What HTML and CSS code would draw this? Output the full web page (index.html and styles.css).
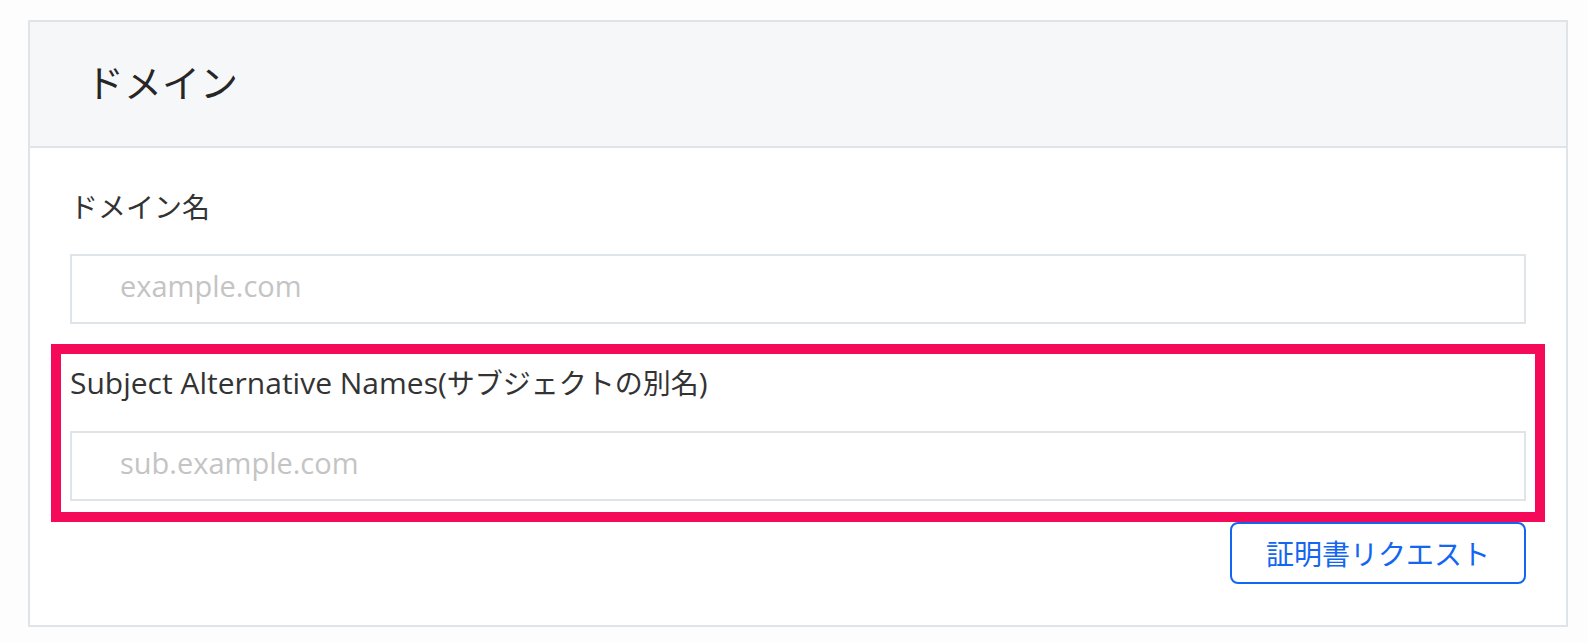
FILE: index.html
```html
<!DOCTYPE html>
<html lang="ja">
<head>
<meta charset="utf-8">
<title>ドメイン</title>
<link rel="stylesheet" href="styles.css">
</head>
<body>
<section class="card">
  <header class="card-header">
    <h2 class="card-title">ドメイン</h2>
  </header>
  <div class="card-body">
    <div class="form-group">
      <label class="form-label" for="domain">ドメイン名</label>
      <input class="form-input" id="domain" type="text" placeholder="example.com">
    </div>
    <div class="form-group form-group-san">
      <label class="form-label" for="san"><span class="latin">Subject Alternative Names(</span>サブジェクトの別名<span class="latin">)</span></label>
      <input class="form-input" id="san" type="text" placeholder="sub.example.com">
      <div class="highlight"></div>
    </div>
    <div class="actions">
      <button class="btn-outline" type="button">証明書リクエスト</button>
    </div>
  </div>
</section>
</body>
</html>
```

FILE: styles.css
```css
* { box-sizing: border-box; }

html, body {
  margin: 0;
  padding: 0;
  background: #fdfdfd;
}

body {
  font-family: "Open Sans", "Noto Sans CJK JP", sans-serif;
  color: #333;
  padding: 20px 20px 16px 28px;
}

.card {
  border: 2px solid #dfe4e8;
  background: #fff;
}

.card-header {
  height: 126px;
  background: #f6f7f9;
  border-bottom: 2px solid #dfe4e8;
  display: flex;
  align-items: center;
  padding-left: 56px;
  padding-bottom: 7px;
}

.card-title {
  margin: 0;
  font-family: "Noto Sans CJK JP", sans-serif;
  font-weight: 400;
  font-size: 38px;
  line-height: 50px;
  color: #262626;
}

.card-body {
  padding: 38px 40px 41px 40px;
  display: flex;
  flex-direction: column;
}

.form-group {
  display: flex;
  flex-direction: column;
  gap: 28px;
}

.form-group + .form-group {
  margin-top: 38px;
}

.form-group-san {
  position: relative;
}

.form-label {
  font-family: "Noto Sans CJK JP", sans-serif;
  font-size: 28px;
  line-height: 40px;
  color: #333;
}

.latin {
  font-family: "Open Sans", sans-serif;
  font-size: 30px;
}

.form-input {
  height: 70px;
  width: 100%;
  border: 2px solid #dfe4e8;
  background: #fff;
  padding: 0 0 8px 48px;
  font-family: "Open Sans", "Noto Sans CJK JP", sans-serif;
  font-size: 29px;
  color: #333;
  outline: none;
}

.form-input::placeholder {
  color: #c4c4c4;
}

.highlight {
  position: absolute;
  left: -19px;
  top: -18px;
  right: -19px;
  bottom: -21px;
  border: 10px solid #f50a5a;
  pointer-events: none;
}

.actions {
  display: flex;
  justify-content: flex-end;
  margin-top: 21px;
}

.btn-outline {
  width: 296px;
  height: 62px;
  border: 2px solid #1366f0;
  border-radius: 8px;
  background: #fff;
  color: #1366f0;
  font-family: "Noto Sans CJK JP", sans-serif;
  font-size: 28px;
  line-height: 1;
  padding: 0;
}
```
